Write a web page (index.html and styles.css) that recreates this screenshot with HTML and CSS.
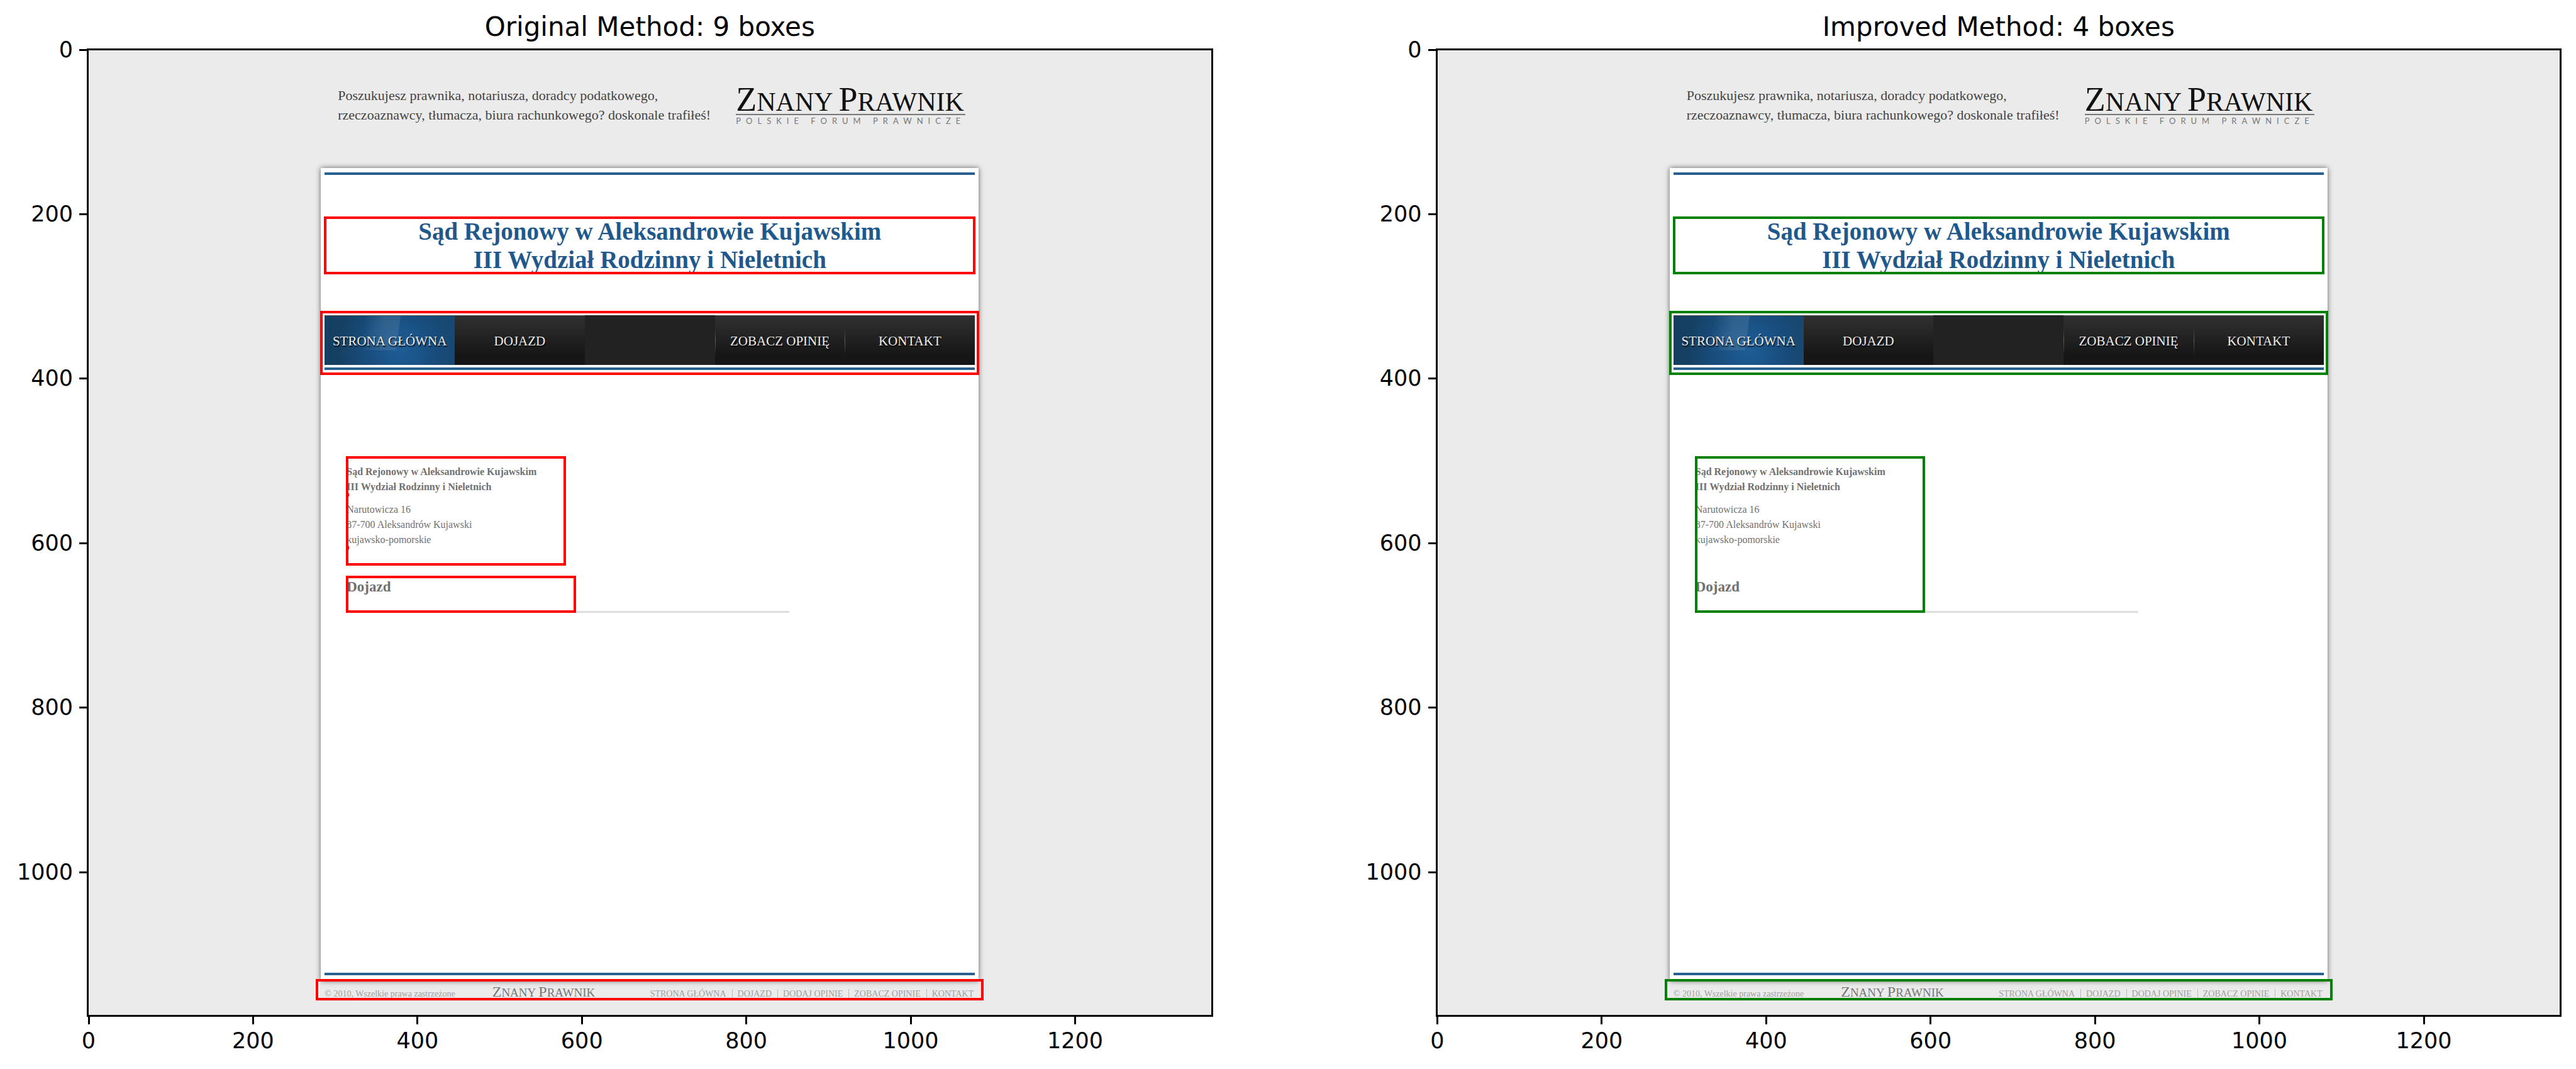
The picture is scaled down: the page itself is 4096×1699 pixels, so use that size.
FILE: index.html
```html
<!DOCTYPE html>
<html lang="en">
<head>
<meta charset="utf-8">
<title>Box detection: original and improved method</title>
<link rel="stylesheet" href="styles.css">
</head>
<body>
<main class="comparison">

  <section class="plot plot-original">
    <h2 class="plot-title">Original Method: 9 boxes</h2>
    <ol class="y-axis">
      <li>0</li><li>200</li><li>400</li><li>600</li><li>800</li><li>1000</li>
    </ol>
    <div class="canvas" lang="pl">
      <header class="site-header">
        <p class="tagline">Poszukujesz prawnika, notariusza, doradcy podatkowego,<br>rzeczoaznawcy, tłumacza, biura rachunkowego? doskonale trafiłeś!</p>
        <div class="brand">
          <p class="logo"><b>Z</b>NANY <b>P</b>RAWNIK</p>
          <p class="brand-sub">POLSKIE FORUM PRAWNICZE</p>
        </div>
      </header>
      <article class="sheet">
        <div class="bar"></div>
        <h1 class="court box">Sąd Rejonowy w Aleksandrowie Kujawskim<br>III Wydział Rodzinny i Nieletnich</h1>
        <nav class="menu box">
          <ul class="menu-list">
            <li class="active"><a href="#">STRONA GŁÓWNA</a></li>
            <li><a href="#">DOJAZD</a></li>
            <li class="empty"></li>
            <li class="divided"><a href="#">ZOBACZ OPINIĘ</a></li>
            <li class="divided"><a href="#">KONTAKT</a></li>
          </ul>
          <div class="menu-bar"></div>
        </nav>
        <section class="details">
          <div class="contact box">
            <p class="contact-name">Sąd Rejonowy w Aleksandrowie Kujawskim<br>III Wydział Rodzinny i Nieletnich</p>
            <address>Narutowicza 16<br>87-700 Aleksandrów Kujawski<br>kujawsko-pomorskie</address>
            <span class="speck speck-name"></span>
            <span class="speck speck-address"></span>
          </div>
          <h3 class="route box">Dojazd</h3>
        </section>
        <hr class="rule">
        <div class="bar bar-end"></div>
      </article>
      <footer class="site-footer box">
        <p class="copyright">© 2010, Wszelkie prawa zastrzeżone</p>
        <p class="logo logo-small"><b>Z</b>NANY <b>P</b>RAWNIK</p>
        <ul class="footer-links">
          <li><a href="#">STRONA GŁÓWNA</a></li>
          <li><a href="#">DOJAZD</a></li>
          <li><a href="#">DODAJ OPINIE</a></li>
          <li><a href="#">ZOBACZ OPINIE</a></li>
          <li><a href="#">KONTAKT</a></li>
        </ul>
      </footer>
    </div>
    <ol class="x-axis">
      <li>0</li><li>200</li><li>400</li><li>600</li><li>800</li><li>1000</li><li>1200</li>
    </ol>
  </section>

  <section class="plot plot-improved">
    <h2 class="plot-title">Improved Method: 4 boxes</h2>
    <ol class="y-axis">
      <li>0</li><li>200</li><li>400</li><li>600</li><li>800</li><li>1000</li>
    </ol>
    <div class="canvas" lang="pl">
      <header class="site-header">
        <p class="tagline">Poszukujesz prawnika, notariusza, doradcy podatkowego,<br>rzeczoaznawcy, tłumacza, biura rachunkowego? doskonale trafiłeś!</p>
        <div class="brand">
          <p class="logo"><b>Z</b>NANY <b>P</b>RAWNIK</p>
          <p class="brand-sub">POLSKIE FORUM PRAWNICZE</p>
        </div>
      </header>
      <article class="sheet">
        <div class="bar"></div>
        <h1 class="court box">Sąd Rejonowy w Aleksandrowie Kujawskim<br>III Wydział Rodzinny i Nieletnich</h1>
        <nav class="menu box">
          <ul class="menu-list">
            <li class="active"><a href="#">STRONA GŁÓWNA</a></li>
            <li><a href="#">DOJAZD</a></li>
            <li class="empty"></li>
            <li class="divided"><a href="#">ZOBACZ OPINIĘ</a></li>
            <li class="divided"><a href="#">KONTAKT</a></li>
          </ul>
          <div class="menu-bar"></div>
        </nav>
        <section class="details box">
          <div class="contact">
            <p class="contact-name">Sąd Rejonowy w Aleksandrowie Kujawskim<br>III Wydział Rodzinny i Nieletnich</p>
            <address>Narutowicza 16<br>87-700 Aleksandrów Kujawski<br>kujawsko-pomorskie</address>
          </div>
          <h3 class="route">Dojazd</h3>
        </section>
        <hr class="rule">
        <div class="bar bar-end"></div>
      </article>
      <footer class="site-footer box">
        <p class="copyright">© 2010, Wszelkie prawa zastrzeżone</p>
        <p class="logo logo-small"><b>Z</b>NANY <b>P</b>RAWNIK</p>
        <ul class="footer-links">
          <li><a href="#">STRONA GŁÓWNA</a></li>
          <li><a href="#">DOJAZD</a></li>
          <li><a href="#">DODAJ OPINIE</a></li>
          <li><a href="#">ZOBACZ OPINIE</a></li>
          <li><a href="#">KONTAKT</a></li>
        </ul>
      </footer>
    </div>
    <ol class="x-axis">
      <li>0</li><li>200</li><li>400</li><li>600</li><li>800</li><li>1000</li><li>1200</li>
    </ol>
  </section>

</main>
</body>
</html>
```

FILE: styles.css
```css
* {
  box-sizing: border-box;
}

body,
h1, h2, h3, p, ol, ul, address {
  margin: 0;
  padding: 0;
}

ol, ul {
  list-style: none;
}

a {
  color: inherit;
  text-decoration: none;
}

body {
  background: #fff;
  color: #000;
  font-family: "DejaVu Sans", sans-serif;
}

.comparison {
  display: grid;
  grid-template-columns: 1fr 1fr;
  column-gap: 216px;
  min-height: 100vh;
  padding: 0 23px 24px 0;
}

/* One plot: title on top, tick labels at the left and below */
.plot {
  display: grid;
  grid-template-columns: 138px 1fr;
  grid-template-rows: auto 1fr auto;
}

.plot-original { --box: #f00; }
.plot-improved { --box: #008000; }

.plot-title {
  grid-column: 2;
  padding: 18px 0 10px;
  font-size: 42px;
  font-weight: 400;
  line-height: 49px;
  text-align: center;
}

.y-axis,
.x-axis {
  display: grid;
  font-size: 35px;
  line-height: 41px;
}

.y-axis {
  grid-template-rows: repeat(5, 200fr) 174fr;
  padding: 2px 0;
}

.y-axis li {
  display: flex;
  align-items: center;
  justify-content: flex-end;
  gap: 10px;
  height: 0;
}

.y-axis li::after {
  content: "";
  width: 12px;
  height: 3px;
  background: #000;
}

.x-axis {
  grid-column: 2;
  grid-template-columns: repeat(6, 200fr) 166fr;
  padding: 0 2px 0 3px;
}

.x-axis li {
  display: flex;
  flex-direction: column;
  align-items: center;
  gap: 6px;
  width: 0;
}

.x-axis li::before {
  content: "";
  width: 3px;
  height: 12px;
  background: #000;
}

/* The analysed page */
.canvas {
  display: flex;
  flex-direction: column;
  align-items: center;
  padding-bottom: 24px;
  border: 3px solid #000;
  background: #ebebeb;
  font-family: "Liberation Serif", serif;
}

.box {
  position: relative;
  outline: 4px solid var(--box);
  outline-offset: -3px;
}

.site-header {
  display: flex;
  align-items: flex-start;
  justify-content: space-between;
  width: 100%;
  max-width: 1046px;
  height: 187px;
  padding: 51px 21px 0 27px;
}

.tagline {
  padding-top: 5px;
  color: #444;
  font-size: 22px;
  line-height: 31px;
}

.logo {
  padding-top: 4px;
  color: #111;
  font-size: 42px;
  line-height: 54px;
}

.logo b {
  font-size: 54px;
  font-weight: 400;
  line-height: 0;
}

.brand-sub {
  margin-top: -8px;
  padding-top: 2px;
  border-top: 2px solid #777;
  color: #777;
  font-family: Lato, sans-serif;
  font-size: 13px;
  letter-spacing: 8px;
  line-height: 14px;
}

.sheet {
  display: flex;
  flex: 1;
  flex-direction: column;
  width: 100%;
  max-width: 1046px;
  padding: 7px 0 9px;
  background: #fff;
  box-shadow: 0 0 8px rgba(0, 0, 0, 0.6);
}

.bar {
  height: 4px;
  margin: 0 6px;
  background: #28608f;
}

.bar-end {
  margin-top: auto;
}

.court {
  margin: 67px 6px 60px;
  color: #1f598c;
  font-size: 39px;
  line-height: 45px;
  text-align: center;
}

.menu {
  padding: 6px 6px 7px;
}

.menu-list {
  display: grid;
  grid-template-columns: repeat(5, 1fr);
  color: #eee;
  font-size: 21px;
  line-height: 24px;
}

.menu-list li {
  height: 79px;
  border-top: 1px solid #555;
  background: linear-gradient(#303030, #252525 35%, #161616 80%);
}

.menu-list .active {
  background:
    linear-gradient(98deg, transparent 30%, rgba(90, 130, 165, 0.35) 45%, rgba(90, 130, 165, 0.35) 56%, transparent 57%) top / 100% 70% no-repeat,
    radial-gradient(circle at 58% 65%, #1e5e98, #184c7b 45%, transparent 75%),
    linear-gradient(90deg, #153f61, #17476f);
}

.menu-list .empty {
  border-top-color: #222;
  background: #222;
}

.menu-list .divided {
  background:
    linear-gradient(transparent 25%, #606060 50%, transparent 80%) left / 1px 100% no-repeat,
    linear-gradient(#303030, #252525 35%, #161616 80%);
}

.menu-list a {
  display: flex;
  align-items: center;
  justify-content: center;
  height: 100%;
  padding-top: 2px;
  text-shadow: 1px 2px 2px #000;
}

.menu-bar {
  height: 4px;
  margin-top: 4px;
  background: #28608f;
}

.details {
  width: 364px;
  margin: 131px 0 0 41px;
  color: #707070;
}

.contact {
  width: 348px;
  padding: 12px 0 28px;
  font-size: 16px;
  line-height: 24px;
}

.contact-name {
  margin-bottom: 12px;
  font-weight: 700;
}

address {
  font-style: normal;
}

/* Detections without any width show up as specks on the box's edge */
.speck {
  position: absolute;
  left: -1px;
  width: 5px;
  height: 5px;
  background: var(--box);
}

.speck-name { top: 58px; }
.speck-address { top: 142px; }

.route {
  margin-top: 18px;
  padding: 2px 0 25px;
  font-size: 23px;
  line-height: 30px;
}

.rule {
  width: 704px;
  height: 3px;
  margin: -2px 0 0 41px;
  border: 0;
  background: #ddd;
}

.site-footer {
  display: flex;
  align-items: baseline;
  width: 100%;
  max-width: 1060px;
  margin-top: -2px;
  padding: 10px 15px 0 13px;
  color: #a0a0a0;
  font-size: 14px;
  line-height: 16px;
}

.copyright {
  margin-right: 59px;
}

.logo-small {
  padding-top: 0;
  color: #777;
  font-size: 19px;
  line-height: 22px;
}

.logo-small b {
  font-size: 24px;
}

.footer-links {
  display: flex;
  margin-left: auto;
}

.footer-links li + li {
  margin-left: 9px;
  padding-left: 8px;
  border-left: 1px solid #bbb;
}
```
